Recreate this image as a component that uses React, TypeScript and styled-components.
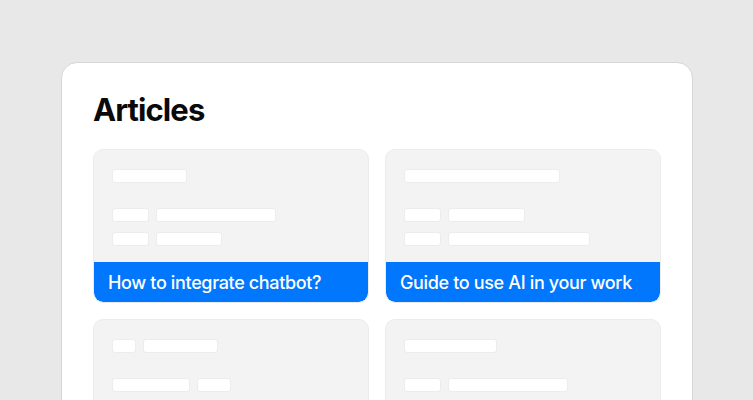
import React from "react";
import styled, { createGlobalStyle } from "styled-components";

const Global = createGlobalStyle`
  html, body { margin: 0; padding: 0; background: #e8e8e8; }
  body { font-family: Inter, "Noto Sans", sans-serif; -webkit-font-smoothing: antialiased; }
`;

const Page = styled.div`
  width: 753px;
  height: 400px;
  overflow: hidden;
  background: #e8e8e8;
  padding: 62px 60px 0 61px;
  box-sizing: border-box;
`;

const Panel = styled.section`
  background: #ffffff;
  border: 1px solid #d6d6d6;
  border-radius: 16px;
  padding: 28px 31px 40px 31px;
  box-sizing: border-box;
  width: 632px;
`;

const Title = styled.h1`
  margin: 0 0 20px 0;
  font-size: 31px;
  font-weight: 700;
  color: #0a0a0a;
  letter-spacing: -0.9px;
  line-height: 38px;
`;

const Grid = styled.div`
  display: grid;
  grid-template-columns: 276px 276px;
  column-gap: 16px;
  row-gap: 16px;
`;

const Card = styled.article`
  background: #f3f3f3;
  border: 1px solid #ececec;
  border-radius: 10px;
  overflow: hidden;
  display: flex;
  flex-direction: column;
  height: 154px;
  box-sizing: border-box;
`;

const Skeleton = styled.div`
  flex: 1;
  padding: 19px 19px 0 18px;
  display: flex;
  flex-direction: column;
`;

const Row = styled.div<{ $mt: number }>`
  display: flex;
  gap: 7px;
  margin-top: ${(p) => p.$mt}px;
`;

const Bar = styled.div<{ $w: number }>`
  width: ${(p) => p.$w}px;
  height: 14px;
  background: #ffffff;
  border: 1px solid #ececec;
  box-sizing: border-box;
  border-radius: 3px;
`;

const Band = styled.div`
  height: 40px;
  background: #0177fd;
  color: #ffffff;
  display: flex;
  align-items: center;
  padding: 0 14px;
  font-size: 18px;
  font-weight: 500;
  letter-spacing: -0.35px;
  border-radius: 0 0 9px 9px;
`;

type Item = { rows: number[][]; label?: string };

const items: Item[] = [
  { rows: [[75], [37, 120], [37, 66]], label: "How to integrate chatbot?" },
  { rows: [[156], [37, 77], [37, 142]], label: "Guide to use AI in your work" },
  { rows: [[24, 75], [78, 34], [37, 80]] },
  { rows: [[93], [37, 120], [37, 90]] },
];

export default function App() {
  return (
    <>
      <Global />
      <Page>
        <Panel>
          <Title>Articles</Title>
          <Grid>
            {items.map((it, i) => (
              <Card key={i}>
                <Skeleton>
                  {it.rows.map((r, j) => (
                    <Row key={j} $mt={j === 0 ? 0 : j === 1 ? 25 : 10}>
                      {r.map((w, k) => (
                        <Bar key={k} $w={w} />
                      ))}
                    </Row>
                  ))}
                </Skeleton>
                {it.label && <Band>{it.label}</Band>}
              </Card>
            ))}
          </Grid>
        </Panel>
      </Page>
    </>
  );
}
